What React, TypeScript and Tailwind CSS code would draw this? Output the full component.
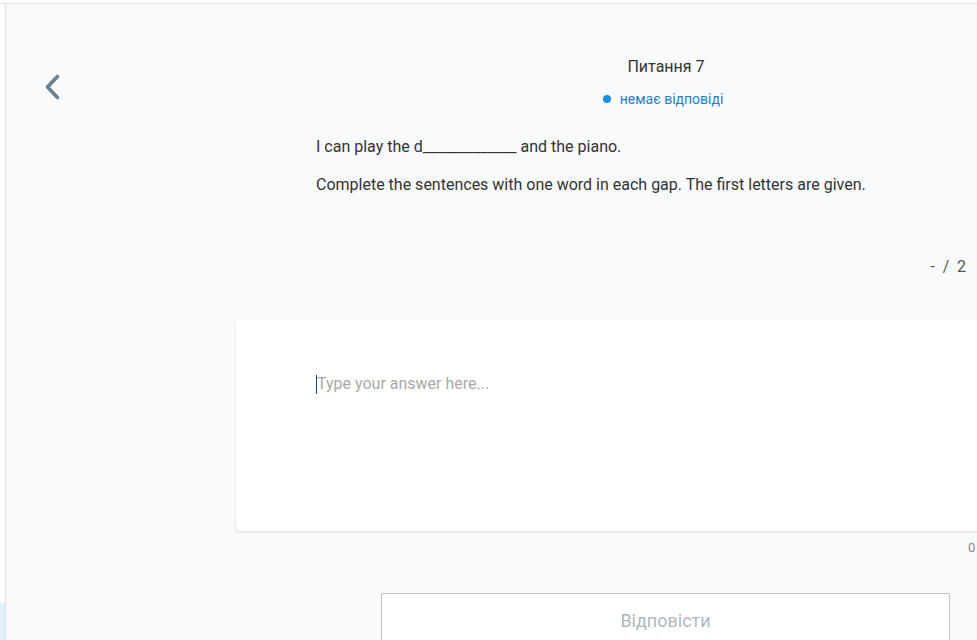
export default function App() {
  return (
    <div className="w-[977px] h-[640px] overflow-hidden bg-white flex flex-col" style={{ fontFamily: "Roboto, 'Noto Sans', sans-serif" }}>
      <div className="h-[3px] shrink-0 bg-white" />
      <div className="flex-1 flex border-t border-[#dfe2e6] min-h-0">
        {/* left strip */}
        <div className="w-[5px] shrink-0 flex flex-col">
          <div className="flex-1 bg-white" />
          <div className="h-[37px] bg-[#e2f0fa]" />
        </div>

        {/* main */}
        <div className="flex-1 flex border-l border-[#dfe2e6] bg-[#f9fafc] min-w-0">
          {/* back */}
          <div className="w-[310px] shrink-0 pl-[35px] pt-[68px]">
            <button className="w-[24px] h-[30px] flex items-center justify-center text-[#6b8090]">
              <svg width="20" height="28" viewBox="0 0 20 28" fill="none" stroke="currentColor" strokeWidth={3.6} strokeLinecap="round" strokeLinejoin="round">
                <path d="M14.5 3.5L4.5 14l10 10.5" />
              </svg>
            </button>
          </div>

          {/* content */}
          <div className="w-[700px] shrink-0 flex flex-col">
            <div className="pt-[51px] flex flex-col items-center">
              <div className="text-[16px] leading-[24px] text-[#333]">Питання 7</div>
              <div className="mt-[10px] mr-[6px] flex items-center gap-[9px] text-[14px] leading-[20px] text-[#1f80c7]">
                <span className="w-[8px] h-[8px] rounded-full bg-[#1a8fe3]" />
                <span>немає відповіді</span>
              </div>
            </div>

            <div className="mt-[26px] text-[16px] leading-[24px] text-[#333]">
              I can play the d_____________ and the piano.
            </div>
            <div className="mt-[14px] text-[16px] leading-[24px] text-[#333]">
              Complete the sentences with one word in each gap. The first letters are given.
            </div>

            <div className="mt-[58px] w-[652px] text-right text-[16px] leading-[24px] text-[#555] tracking-[0.12em]">
              - / 2
            </div>

            <div className="mt-[40px] -ml-[80px] w-[860px] h-[212px] shrink-0 bg-white rounded-[4px] shadow-[0_1px_3px_rgba(0,0,0,0.13)] pl-[80px] pt-[53px]">
              <div className="flex items-center text-[16px] leading-[24px] text-[#a9a9a9]">
                <span className="w-px h-[19px] bg-[#1c4a5a]" />
                <span>Type your answer here...</span>
              </div>
            </div>

            <div className="mt-[9px] ml-[652px] text-[13px] leading-[16px] text-[#7f8a94]">0</div>

            <button className="mt-[37px] ml-[65px] w-[569px] h-[54px] shrink-0 bg-white border border-[#b9c3cc] rounded-[2px] text-[18px] text-[#aeb8c1]">
              Відповісти
            </button>
          </div>
        </div>
      </div>
    </div>
  );
}
